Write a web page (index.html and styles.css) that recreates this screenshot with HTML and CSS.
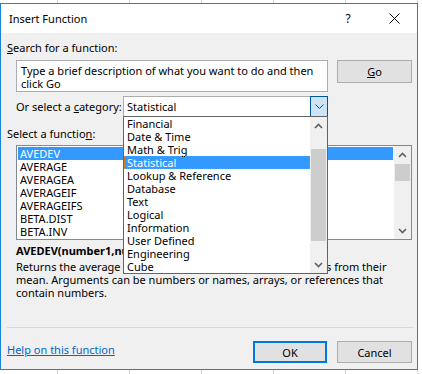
FILE: index.html
```html
<!DOCTYPE html>
<html>
<head>
<meta charset="utf-8">
<link rel="stylesheet" href="styles.css">
</head>
<body>
<div class="dialog">
  <div class="titlebar">
    <span class="title">Insert Function</span>
    <span class="help">?</span>
    <span class="close"><svg width="11" height="11" viewBox="0 0 11 11"><path d="M0.5 0.5L10.5 10.5M10.5 0.5L0.5 10.5" stroke="#000" stroke-width="1" fill="none"/></svg></span>
  </div>
  <div class="content">
    <div class="label"><u>S</u>earch for a function:</div>
    <div class="search-row">
      <div class="search-box">Type a brief description of what you want to do and then click Go</div>
      <button class="btn go"><u>G</u>o</button>
    </div>
    <div class="cat-row">
      <span class="cat-label">Or select a <u>c</u>ategory:</span>
      <div class="combo">
        <span class="combo-text">Statistical</span>
        <span class="combo-btn"><svg width="9" height="5" viewBox="0 0 9 5"><polyline points="0.5,0.5 4.5,4.5 8.5,0.5" fill="none" stroke="#444" stroke-width="1"/></svg></span>
        <div class="dropdown">
          <ul class="dd-list">
            <li>Financial</li>
            <li>Date &amp; Time</li>
            <li>Math &amp; Trig</li>
            <li class="sel focus">Statistical</li>
            <li>Lookup &amp; Reference</li>
            <li>Database</li>
            <li>Text</li>
            <li>Logical</li>
            <li>Information</li>
            <li>User Defined</li>
            <li>Engineering</li>
            <li>Cube</li>
          </ul>
          <div class="scrollbar dd-scroll">
            <span class="sb-btn sb-up"><svg width="9" height="6" viewBox="0 0 9 6"><polyline points="1,5 4.5,1.5 8,5" fill="none" stroke="#606060" stroke-width="1.6"/></svg></span>
            <span class="thumb"></span>
            <span class="sb-btn sb-down"><svg width="9" height="6" viewBox="0 0 9 6"><polyline points="1,1 4.5,4.5 8,1" fill="none" stroke="#606060" stroke-width="1.6"/></svg></span>
          </div>
        </div>
      </div>
    </div>
    <div class="label fn-label">Select a functio<u>n</u>:</div>
    <div class="listbox">
      <ul class="fn-list">
        <li class="sel">AVEDEV</li>
        <li>AVERAGE</li>
        <li>AVERAGEA</li>
        <li>AVERAGEIF</li>
        <li>AVERAGEIFS</li>
        <li>BETA.DIST</li>
        <li>BETA.INV</li>
      </ul>
      <div class="scrollbar fn-scroll">
        <span class="sb-btn sb-up"><svg width="9" height="6" viewBox="0 0 9 6"><polyline points="1,5 4.5,1.5 8,5" fill="none" stroke="#606060" stroke-width="1.6"/></svg></span>
        <span class="thumb"></span>
        <span class="sb-btn sb-down"><svg width="9" height="6" viewBox="0 0 9 6"><polyline points="1,1 4.5,4.5 8,1" fill="none" stroke="#606060" stroke-width="1.6"/></svg></span>
      </div>
    </div>
    <div class="sig">AVEDEV(number1,number2,...)</div>
    <p class="desc">Returns the average of the absolute deviations of data points from their mean. Arguments can be numbers or names, arrays, or references that contain numbers.</p>
    <div class="sep"></div>
    <div class="footer">
      <a class="help-link" href="#">Help on this function</a>
      <button class="btn ok">OK</button>
      <button class="btn cancel">Cancel</button>
    </div>
  </div>
</div>
</body>
</html>
```
FILE: styles.css
```css
* { box-sizing: border-box; }

body {
  margin: 0;
  width: 422px;
  height: 374px;
  overflow: hidden;
  background-color: #fff;
  background-image: linear-gradient(to right, #d4d4d4 1px, transparent 1px);
  background-size: 72px 100%;
  background-position: 57px 0;
  font-family: "Noto Sans", sans-serif;
  font-size: 11px;
  color: #000;
}

.dialog {
  margin-top: 3px;
  width: 418px;
  height: 367px;
  border: 1px solid #1883d7;
  background: #f0f0f0;
  display: flex;
  flex-direction: column;
}

.titlebar {
  height: 29px;
  flex: none;
  background: #fff;
  display: flex;
  align-items: center;
  padding-left: 8px;
  font-size: 11px;
}
.title { flex: 1; }
.help {
  width: 46px;
  text-align: center;
  font-size: 12px;
}
.close {
  width: 46px;
  display: flex;
  justify-content: center;
  align-items: center;
}

.content {
  flex: 1;
  padding: 7px 5px 0 6px;
}

.label { line-height: 15px; height: 15px; }

.search-row {
  display: flex;
  align-items: flex-start;
  margin-top: 5px;
  padding-left: 9px;
}
.search-box {
  width: 312px;
  height: 32px;
  border: 1px solid #abadb3;
  background: #fff;
  padding: 3px 4px;
  line-height: 13px;
}

.btn {
  font: inherit;
  color: #000;
  background: #e1e1e1;
  border: 1px solid #adadad;
  padding: 0;
}
.go { width: 75px; height: 23px; margin-left: 9px; }

.cat-row {
  display: flex;
  align-items: center;
  margin-top: 4px;
  padding-left: 9px;
  height: 21px;
}
.cat-label { width: 107px; }

.combo {
  position: relative;
  width: 205px;
  height: 21px;
  border: 1px solid #adadad;
  background: #fff;
  display: flex;
  align-items: center;
  padding-left: 3px;
}
.combo-btn {
  position: absolute;
  right: -1px;
  top: -1px;
  width: 18px;
  height: 21px;
  border: 1px solid #005499;
  background: #cce4f7;
  display: flex;
  align-items: center;
  justify-content: center;
}

.dropdown {
  position: absolute;
  left: -1px;
  top: 19px;
  width: 205px;
  height: 158px;
  border: 1px solid #646464;
  background: #fff;
  display: flex;
  z-index: 2;
}
.dd-list {
  list-style: none;
  margin: 0;
  padding: 0;
  width: 186px;
}
.dd-list li {
  height: 13px;
  line-height: 13px;
  padding-left: 3px;
  white-space: nowrap;
}
.sel { background: #3399ff; color: #fff; }
.focus { outline: 1px dotted #d9822b; outline-offset: -1px; }

.scrollbar {
  width: 17px;
  background: #f0f0f0;
  position: relative;
}
.sb-btn {
  position: absolute;
  left: 0;
  width: 17px;
  height: 17px;
  display: flex;
  align-items: center;
  justify-content: center;
}
.sb-up { top: 0; }
.sb-down { bottom: 0; }
.thumb {
  position: absolute;
  left: 1px;
  width: 15px;
  background: #cdcdcd;
}
.dd-scroll .thumb { top: 32px; height: 92px; }

.fn-label { margin-top: 9px; }

.listbox {
  margin: 4px 0 0 9px;
  width: 396px;
  height: 95px;
  border: 1px solid #828790;
  background: #fff;
  display: flex;
}
.fn-list {
  list-style: none;
  margin: 0;
  padding: 1px;
  flex: 1;
}
.fn-list li {
  height: 13px;
  line-height: 13px;
  padding-left: 2px;
}
.fn-scroll .thumb { top: 18px; height: 17px; }

.sig {
  margin-top: 4px;
  margin-left: 9px;
  line-height: 13px;
  font-weight: bold;
  white-space: nowrap;
}
.desc {
  margin: 3px 0 0 9px;
  width: 385px;
  line-height: 13px;
}

.sep {
  margin-top: 28px;
  height: 1px;
  background: #d8d8d8;
  width: 406px;
}

.footer {
  display: flex;
  align-items: flex-start;
  margin-top: 13px;
}
.help-link {
  margin-top: 1px;
  line-height: 15px;
  color: #0066cc;
  text-decoration: underline;
  margin-right: auto;
}
.ok {
  width: 74px;
  height: 22px;
  border: 2px solid #0078d7;
}
.cancel {
  width: 75px;
  height: 22px;
  margin-left: 10px;
}
```
